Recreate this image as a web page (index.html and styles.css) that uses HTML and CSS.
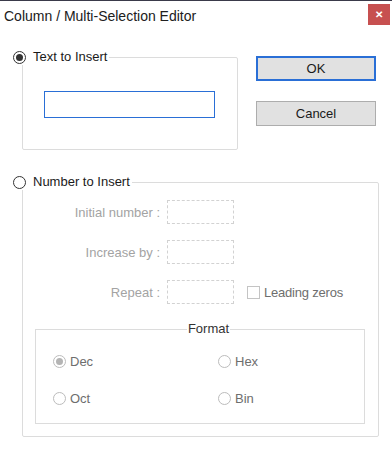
FILE: index.html
```html
<!DOCTYPE html>
<html lang="en">
<head>
    <meta charset="UTF-8">
    <title>Column / Multi-Selection Editor</title>
    <link rel="stylesheet" href="styles.css">
</head>
<body>
    <div class="dialog">
        <div class="titlebar">
            <span class="title">Column / Multi-Selection Editor</span>
            <span class="close">&#x2715;</span>
        </div>

        <div class="content">
            <div class="top-row">
                <fieldset class="group group-text">
                    <legend><span class="radio checked"></span>Text to Insert</legend>
                    <div class="text-input"></div>
                </fieldset>

                <div class="buttons">
                    <div class="btn btn-default">OK</div>
                    <div class="btn">Cancel</div>
                </div>
            </div>

            <fieldset class="group group-number">
                <legend><span class="radio"></span>Number to Insert</legend>

                <div class="num-grid">
                    <span class="num-label">Initial number :</span>
                    <span class="num-input"></span>
                    <span></span>

                    <span class="num-label">Increase by :</span>
                    <span class="num-input"></span>
                    <span></span>

                    <span class="num-label">Repeat :</span>
                    <span class="num-input"></span>
                    <span class="check-row"><span class="checkbox"></span>Leading zeros</span>
                </div>

                <fieldset class="format">
                    <legend>Format</legend>
                    <div class="format-grid">
                        <span class="opt"><span class="radio disabled checked"></span>Dec</span>
                        <span class="opt"><span class="radio disabled"></span>Hex</span>
                        <span class="opt"><span class="radio disabled"></span>Oct</span>
                        <span class="opt"><span class="radio disabled"></span>Bin</span>
                    </div>
                </fieldset>
            </fieldset>
        </div>
    </div>
</body>
</html>
```

FILE: styles.css
```css
:root {
    --group-border: #dcdcdc;
    --disabled: #a3a3a3;
    --text: #1a1a1a;
    --blue: #2a6fd6;
}

* {
    box-sizing: border-box;
}

body {
    margin: 0;
    background: #ffffff;
    font-family: 'Liberation Sans', Arial, sans-serif;
    font-size: 13px;
    color: var(--text);
}

.dialog {
    width: 392px;
    height: 450px;
    border-top: 1px solid #3a3a4a;
}

.titlebar {
    display: flex;
    justify-content: space-between;
    align-items: flex-start;
    height: 29px;
}

.title {
    font-size: 14px;
    padding: 7px 0 0 4px;
    color: #202020;
}

.close {
    width: 22px;
    height: 21px;
    margin: 3px 2px 0 0;
    background: #c75050;
    color: #ffffff;
    font-size: 10px;
    font-weight: bold;
    display: flex;
    align-items: center;
    justify-content: center;
}

.content {
    padding: 19px 0 0 13px;
}

.top-row {
    display: flex;
    align-items: flex-start;
}

/* group boxes */
.group {
    margin: 0 0 0 9px;
    padding: 0;
    border: 1px solid var(--group-border);
    border-radius: 2px;
}

.group legend {
    margin-left: -10px;
    padding: 0 2px 0 0;
    line-height: 16px;
    display: flex;
    align-items: center;
    gap: 7px;
}

.group-text {
    width: 216px;
    height: 101px;
}

.text-input {
    width: 171px;
    height: 27px;
    margin: 26px 0 0 21px;
    border: 1px solid var(--blue);
}

.buttons {
    display: flex;
    flex-direction: column;
    gap: 20px;
    margin: 7px 0 0 18px;
}

.btn {
    width: 120px;
    height: 25px;
    background: #e1e1e1;
    border: 1px solid #adadad;
    display: flex;
    align-items: center;
    justify-content: center;
}

.btn-default {
    border: 2px solid var(--blue);
}

/* radios */
.radio {
    width: 13px;
    height: 13px;
    border: 1px solid #333333;
    border-radius: 50%;
    display: inline-flex;
    align-items: center;
    justify-content: center;
    flex-shrink: 0;
    background: #ffffff;
}

.radio.checked::after {
    content: '';
    width: 7px;
    height: 7px;
    border-radius: 50%;
    background: #333333;
}

.radio.disabled {
    border-color: #bcbcbc;
}

.radio.disabled.checked::after {
    width: 7px;
    height: 7px;
    background: #b4b4b4;
}

/* number group */
.group-number {
    width: 357px;
    margin-top: 24px;
    padding-bottom: 12px;
}

.num-grid {
    display: grid;
    grid-template-columns: 137px 67px auto;
    column-gap: 7px;
    row-gap: 16px;
    align-items: center;
    margin-top: 10px;
}

.num-label {
    text-align: right;
    color: var(--disabled);
}

.num-input {
    height: 24px;
    border: 1px dashed #d2d2d2;
}

.check-row {
    display: flex;
    align-items: center;
    gap: 4px;
    margin-left: 6px;
    color: #6e6e6e;
    letter-spacing: -0.2px;
}

.checkbox {
    width: 13px;
    height: 13px;
    border: 1px solid #c4c4c4;
}

.format {
    margin: 17px 13px 0 12px;
    padding: 0 0 18px 17px;
    border: 1px solid var(--group-border);
}

.format legend {
    margin: 0 auto;
    padding: 0 1px;
    line-height: 16px;
    color: #333333;
}

.format-grid {
    display: grid;
    grid-template-columns: 165px auto;
    row-gap: 24px;
    margin-top: 18px;
}

.opt {
    display: flex;
    align-items: center;
    gap: 4px;
    color: #6e6e6e;
    line-height: 13px;
}
```
